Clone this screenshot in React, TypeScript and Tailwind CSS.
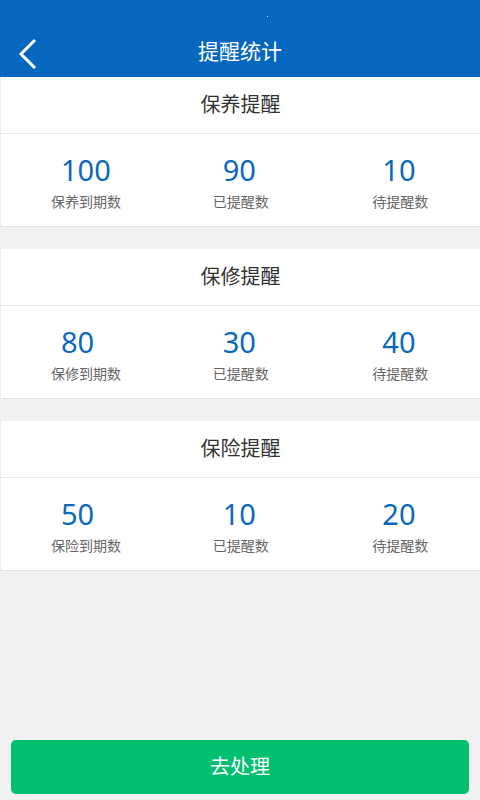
const groups = [
  {
    title: "保养提醒",
    stats: [
      { value: 100, label: "保养到期数" },
      { value: 90, label: "已提醒数" },
      { value: 10, label: "待提醒数" },
    ],
  },
  {
    title: "保修提醒",
    stats: [
      { value: 80, label: "保修到期数" },
      { value: 30, label: "已提醒数" },
      { value: 40, label: "待提醒数" },
    ],
  },
  {
    title: "保险提醒",
    stats: [
      { value: 50, label: "保险到期数" },
      { value: 10, label: "已提醒数" },
      { value: 20, label: "待提醒数" },
    ],
  },
];

export default function App() {
  return (
    <div
      className="flex flex-col w-[480px] h-[800px] bg-[#f1f1f3]"
      style={{ fontFamily: '"Noto Sans", "Noto Sans CJK SC", sans-serif' }}
    >
      {/* Header */}
      <div className="relative h-[77px] bg-[#0567be] shrink-0">
        <div className="absolute left-[267px] top-[16px] h-[1px] w-[1px] bg-white/80" />
        <button className="absolute left-[14px] top-[34px] p-1">
          <svg width="20" height="32" viewBox="0 0 20 32" fill="none" stroke="white" strokeWidth={3}>
            <path d="M17 2L3 16l14 14" />
          </svg>
        </button>
        <div className="flex h-full items-end justify-center pb-[15px]">
          <span className="text-[21px] text-white leading-none">提醒统计</span>
        </div>
      </div>

      {/* Cards */}
      <div className="flex flex-col gap-[22px]">
        {groups.map((g) => (
          <div key={g.title} className="bg-white border-b border-[#e2e2e4] border-l border-l-[#ececee]">
            <div className="h-[57px] flex items-center justify-center border-b border-[#e6e6e8]">
              <span className="text-[20px] text-[#333]">{g.title}</span>
            </div>
            <div className="h-[92px] grid grid-cols-3">
              {g.stats.map((s, i) => (
                <div key={i} className={`flex flex-col items-start pt-[18px] ${i === 0 ? "pl-[50px]" : "pl-[52px]"}`}>
                  <span className="pl-[10px] text-[29px] leading-[36px] text-[#0b68bd]">{s.value}</span>
                  <span className="mt-[4px] text-[14px] leading-[20px] text-[#666]">{s.label}</span>
                </div>
              ))}
            </div>
          </div>
        ))}
      </div>

      <div className="flex-1" />

      {/* Button */}
      <div className="px-[11px] pb-[6px]">
        <button className="w-full h-[54px] rounded-[5px] bg-[#00c070] text-white text-[20px]">
          去处理
        </button>
      </div>
    </div>
  );
}
